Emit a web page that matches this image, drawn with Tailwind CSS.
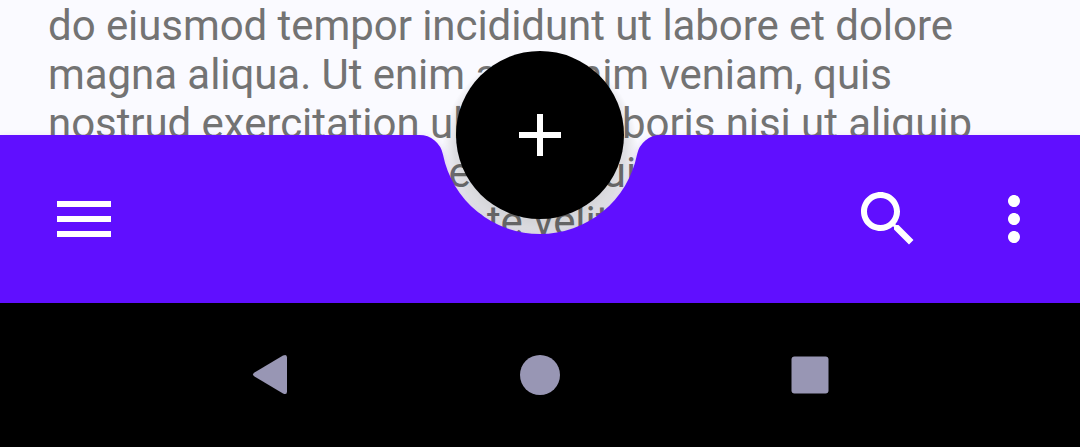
<!DOCTYPE html>
<html lang="en">
<head>
<meta charset="utf-8">
<title>Bottom app bar</title>
<script src="https://cdn.jsdelivr.net/npm/@tailwindcss/browser@4"></script>
</head>
<body class="bg-black">
<div class="relative flex h-[447px] w-[1080px] flex-col overflow-hidden bg-black">
  <main class="h-[303px] shrink-0 overflow-hidden bg-[#fafaff] pt-px pl-12 font-['Roboto',sans-serif] text-[42px] leading-[49px] tracking-[-0.06px] whitespace-nowrap text-[#737373]">
    <p>do eiusmod tempor incididunt ut labore et dolore<br>magna aliqua. Ut enim ad minim veniam, quis<br>nostrud exercitation ullamco laboris nisi ut aliquip<br>ex ea commodo consequat. Duis aute irure dolor in<br>reprehenderit in voluptate velit esse cillum</p>
  </main>

  <!-- App bar with cradle cut-out and floating action button -->
  <div class="absolute inset-x-0 top-0 h-[303px]">
    <svg class="absolute inset-0" width="1080" height="303" viewBox="0 0 1080 303">
      <defs>
        <radialGradient id="fabShadow" gradientUnits="userSpaceOnUse" cx="540" cy="149" r="98">
          <stop offset=".74" stop-color="#000" stop-opacity=".15"/>
          <stop offset=".87" stop-color="#000" stop-opacity=".11"/>
          <stop offset="1" stop-color="#000" stop-opacity="0"/>
        </radialGradient>
        <filter id="barGlow" x="-5%" y="-20%" width="110%" height="140%"><feGaussianBlur stdDeviation="4"/></filter>
      </defs>
      <path d="M0 135H419.4A24 24 0 0 1 442.9 154.3A99 99 0 0 0 637.1 154.3A24 24 0 0 1 660.6 135H1080V303H0Z" fill="#5b20c0" fill-opacity=".28" filter="url(#barGlow)" transform="translate(0 4)"/>
      <circle cx="540" cy="149" r="98" fill="url(#fabShadow)"/>
      <path d="M0 135H419.4A24 24 0 0 1 442.9 154.3A99 99 0 0 0 637.1 154.3A24 24 0 0 1 660.6 135H1080V303H0Z" fill="#600fff"/>
    </svg>
    <div class="absolute inset-x-0 bottom-0 flex h-[168px] items-center pr-[30px] pl-12">
      <button aria-label="Menu"><svg class="block" width="72" height="72" viewBox="0 0 24 24" fill="#fff"><path d="M3 18h18v-2H3v2zm0-5h18v-2H3v2zm0-7v2h18V6H3z"/></svg></button>
      <button class="ml-auto" aria-label="Search"><svg class="block" width="72" height="72" viewBox="0 0 24 24" fill="#fff"><path d="M15.500 14h-.79l-.28-.27C15.410 12.590 16 11.110 16 9.500 16 5.910 13.090 3 9.500 3S3 5.910 3 9.500 5.910 16 9.500 16c1.610 0 3.090-.59 4.230-1.570l.27.28v.79l5 4.990L20.490 19l-4.990-5zm-6 0C7.010 14 5 11.990 5 9.500S7.010 5 9.500 5 14 7.010 14 9.500 11.990 14 9.500 14z"/></svg></button>
      <button class="ml-[54px]" aria-label="More"><svg class="block" width="72" height="72" viewBox="0 0 24 24" fill="#fff"><path d="M12 8c1.100 0 2-.9 2-2s-.9-2-2-2-2 .9-2 2 .9 2 2 2zm0 2c-1.100 0-2 .9-2 2s.9 2 2 2 2-.9 2-2-.9-2-2-2zm0 6c-1.100 0-2 .9-2 2s.9 2 2 2 2-.9 2-2-.9-2-2-2z"/></svg></button>
    </div>
    <button class="absolute top-[51px] left-[456px] flex size-[168px] items-center justify-center rounded-full bg-black" aria-label="Add">
      <svg width="72" height="72" viewBox="0 0 24 24" fill="#fff"><path d="M19 13h-6v6h-2v-6H5v-2h6V5h2v6h6v2z"/></svg>
    </button>
  </div>

  <nav class="flex h-36 items-center justify-center gap-[198px] bg-black">
    <svg width="72" height="72" viewBox="0 0 72 72" fill="#9896b4"><path d="M20.500 33.500L49 16.600Q53 14.500 53 18.500V52.500Q53 56.500 49 54.400L20.500 37.500Q17.500 35.500 20.500 33.500Z"/></svg>
    <svg width="72" height="72" viewBox="0 0 72 72" fill="#9896b4"><circle cx="36" cy="36" r="20"/></svg>
    <svg width="72" height="72" viewBox="0 0 72 72" fill="#9896b4"><rect x="17.500" y="17.500" width="37" height="37" rx="3"/></svg>
  </nav>
</div>
</body>
</html>
